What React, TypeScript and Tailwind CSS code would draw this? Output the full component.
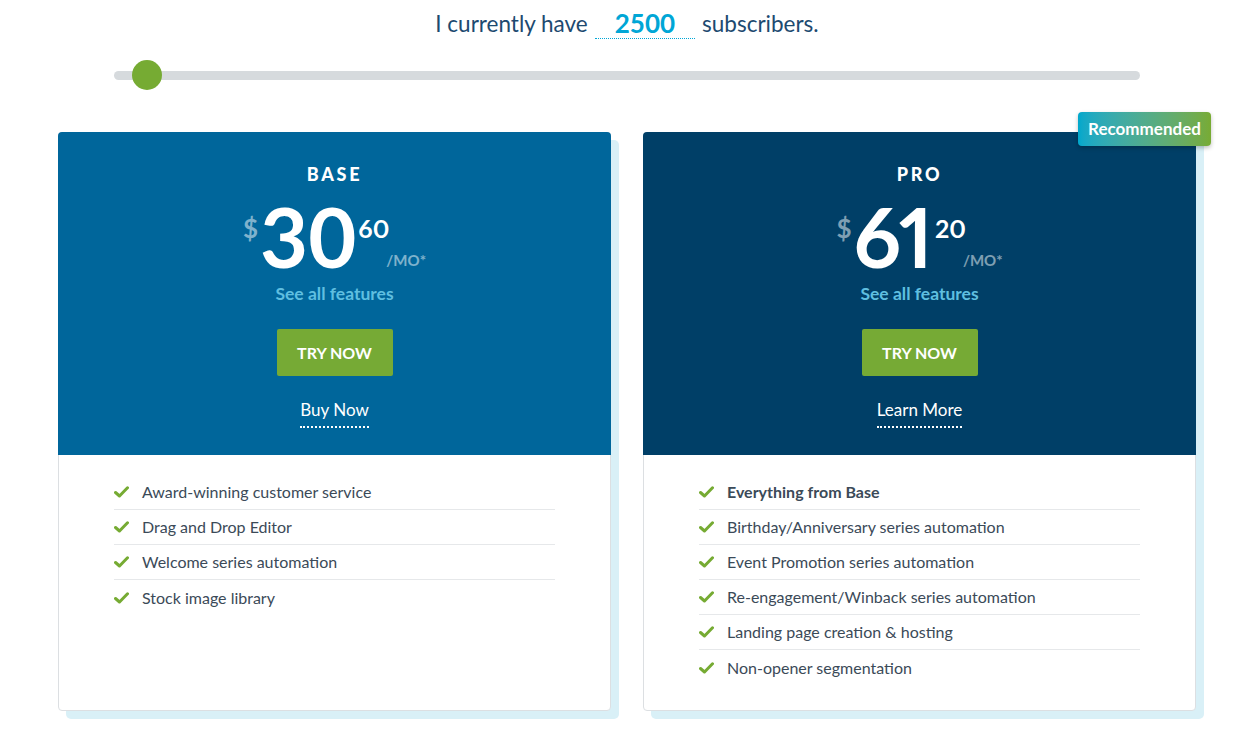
import React from "react";

function Check() {
  return (
    <svg width="15" height="12" viewBox="0 0 15 12" className="shrink-0">
      <path d="M1.5 6.5 L5.5 10 L13.5 1.8" fill="none" stroke="#76ab33" strokeWidth="3" strokeLinecap="round" strokeLinejoin="round" />
    </svg>
  );
}

type Plan = {
  name: string;
  dollars: string;
  cents: string;
  bg: string;
  link: string;
  numClass: string;
  features: string[];
  boldFirst?: boolean;
  recommended?: boolean;
};

const plans: Plan[] = [
  {
    name: "BASE",
    dollars: "30",
    cents: "60",
    bg: "bg-[#00669b]",
    link: "Buy Now",
    numClass: "tabular-nums",
    features: [
      "Award-winning customer service",
      "Drag and Drop Editor",
      "Welcome series automation",
      "Stock image library",
    ],
  },
  {
    name: "PRO",
    dollars: "61",
    cents: "20",
    bg: "bg-[#003f67]",
    link: "Learn More",
    numClass: "proportional-nums",
    boldFirst: true,
    recommended: true,
    features: [
      "Everything from Base",
      "Birthday/Anniversary series automation",
      "Event Promotion series automation",
      "Re-engagement/Winback series automation",
      "Landing page creation & hosting",
      "Non-opener segmentation",
    ],
  },
];

function Card({ p }: { p: Plan }) {
  return (
    <div className="relative">
      <div className="absolute left-[8px] top-[8px] right-[-8px] bottom-[-8px] rounded-[5px] bg-[#d9f0f7]" />
      <div className="relative flex h-full flex-col rounded-[4px] border border-[#dcdfe2] bg-white">
        {p.recommended && (
          <div className="absolute right-[-16px] top-[-21px] z-10 flex h-[34px] w-[133px] items-center justify-center rounded-[4px] bg-gradient-to-r from-[#00a8cc] to-[#78ab33] text-[17px] font-bold text-white shadow-[0_2px_4px_rgba(0,0,0,0.25)]">
            Recommended
          </div>
        )}
        <div className={`${p.bg} -m-px mb-0 flex h-[323px] flex-col items-center rounded-t-[4px] pt-[32px] text-white`}>
          <div className="h-[20px] text-[18px] font-black leading-[20px] tracking-[0.15em]">{p.name}</div>
          <div className="mt-[12px] flex h-[80px] items-start">
            <span className="mt-[19px] mr-[2px] text-[26px] font-bold leading-none text-white/50">$</span>
            <span className={`h-[80px] text-[83px] font-bold leading-[80px] ${p.numClass}`}>{p.dollars}</span>
            <div className="ml-[2px] flex flex-col">
              <span className="mt-[20px] text-[25px] font-bold leading-none proportional-nums">{p.cents}</span>
              <span className="mt-[12px] pl-[28px] text-[15px] font-bold leading-none text-white/50">/MO*</span>
            </div>
          </div>
          <div className="mt-[6px] text-[17.5px] font-bold leading-[24px] text-[#5fbfe0]">See all features</div>
          <button className="mt-[23px] flex h-[47px] w-[116px] items-center justify-center rounded-[2px] bg-[#76aa35] text-[16px] font-bold text-white">
            TRY NOW
          </button>
          <span className="mt-[22px] border-b-2 border-dotted border-white pb-[4px] text-[17px] leading-[24px]">{p.link}</span>
        </div>
        <ul className="flex-1 px-[55px] pt-[20px] pb-[25px]">
          {p.features.map((f, i) => (
            <li
              key={f}
              className={`flex h-[35px] items-center gap-[13px] text-[16px] text-[#3b4a58] ${
                i < p.features.length - 1 ? "border-b border-[#e6e8ea]" : ""
              } ${p.boldFirst && i === 0 ? "font-bold" : ""}`}
            >
              <Check />
              <span>{f}</span>
            </li>
          ))}
        </ul>
      </div>
    </div>
  );
}

export default function App() {
  return (
    <div className="min-h-[746px] bg-white pl-[12px]" style={{ fontFamily: "Lato, 'Open Sans', sans-serif" }}>
      <div className="w-[1230px]">
        <div className="flex h-[47px] items-center justify-center text-[22.5px] text-[#1d4a70]">
          <span>I currently have</span>
          <span className="mx-[7px] border-b border-dotted border-[#00a6d6] px-[20px] text-[26px] font-bold leading-[30px] text-[#00a6d6]">2500</span>
          <span>subscribers.</span>
        </div>
        <div className="relative mx-[102px] mt-[13px] h-[30px]">
          <div className="absolute left-0 right-0 top-[11px] h-[9px] rounded-full bg-[#d6dadd]" />
          <div className="absolute left-[18px] top-0 h-[30px] w-[30px] rounded-full bg-[#76ab33]" />
        </div>
        <div className="mt-[42px] grid grid-cols-2 gap-[32px] px-[46px]">
          {plans.map((p) => (
            <Card key={p.name} p={p} />
          ))}
        </div>
      </div>
    </div>
  );
}
